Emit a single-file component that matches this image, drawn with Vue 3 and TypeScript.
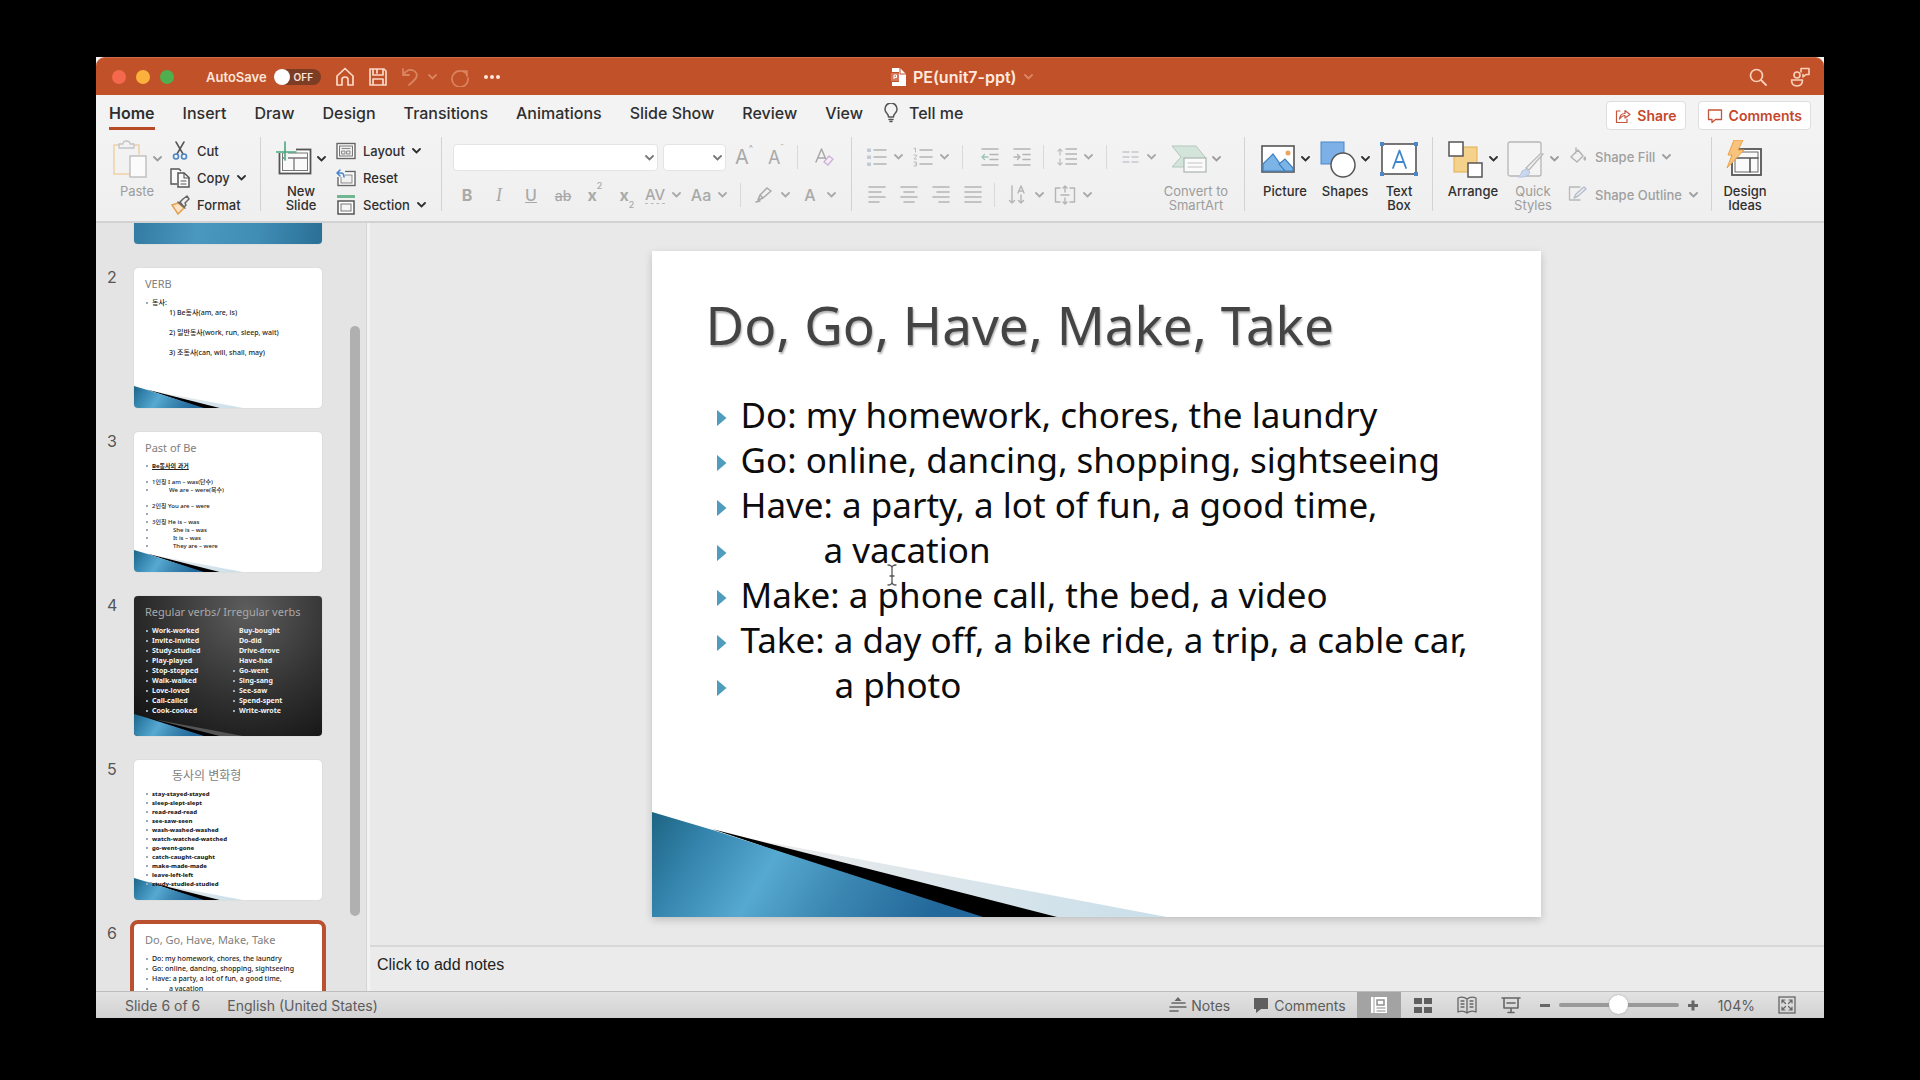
<script setup lang="ts">
import { h, onMounted, ref } from 'vue'

type IconDef = [width: number, height: number, markup: string]

const line = (d: string, c = '#555', w = 1.5) =>
  `<path d="${d}" fill="none" stroke="${c}" stroke-width="${w}" stroke-linejoin="round" stroke-linecap="round"/>`
const G = '#b4b4b4'

const icons: Record<string, IconDef> = {
  chevron: [9, 6, `<path d="M1 1l3.500 3.500L8 1" fill="none" stroke="currentColor" stroke-width="1.800" stroke-linecap="round"/>`],
  home: [20, 20, line('M2 9L10 1.500L18 9V18H13V12.500Q13 10 10 10Q7 10 7 12.500V18H2Z', '#fbd9c6', 1.7)],
  save: [20, 20, line('M2 2H16L18 4V18H2ZM5 2V8H15V2M5 18V12H15V18M9 3V6', '#fbd9c6', 1.7)],
  undo: [18, 20, line('M2 2V8H8M2 8Q6 2 11 3Q17 5 15.500 10Q14 13 8 18', '#d98560', 1.8)],
  redo: [20, 20, line('M17 4V9M17 8A8 8 0 1 0 18 11M12 4H17', '#d98560', 1.7)],
  more: [18, 6, '<g fill="#fde6da"><circle cx="3" cy="3" r="2"/><circle cx="9" cy="3" r="2"/><circle cx="15" cy="3" r="2"/></g>'],
  doc: [15, 18, '<path d="M1 0H9L15 6V18H1V14H8V4H1Z" fill="#fff"/><path d="M9 0V6H15" fill="none" stroke="#c05129"/><rect y="5" width="8" height="8" fill="#d4775a"/><path d="M3 11V7H5.500V9.500H3" fill="none" stroke="#fff"/>'],
  search: [18, 18, '<circle cx="7.500" cy="7.500" r="6" fill="none" stroke="#fbd0bb" stroke-width="1.700"/>' + line('M12 12L17 17', '#fbd0bb', 1.8)],
  person: [20, 20, '<circle cx="7" cy="8" r="3" fill="none" stroke="#fbd0bb" stroke-width="1.600"/>' + line('M1.500 13H12.500Q12.500 19 7 19Q1.500 19 1.500 13ZM11 5V1.500H19V7.500H16L13 10V7.500', '#fbd0bb', 1.6)],
  bulb: [14, 20, line('M4.500 14Q4.500 12 3 10.500A6 6 0 1 1 11 10.500Q9.500 12 9.500 14ZM5 16.500H9M6 18.500H8', '#555', 1.5)],
  share: [16, 16, line('M5 3H1.500V14.500H12V11', '#c4553a', 1.2) + line('M4.500 11Q5 5.500 10 5.500V2.500L15 6.500L10 10V7.500Q7 7.500 4.500 11Z', '#c4553a', 1.2)],
  comment: [16, 16, line('M1.500 2H14.500V11.500H8.500L5 14.500V11.500H1.500Z', '#c4553a', 1.3)],
  paste: [36, 38, line('M7 5H2V34H18M22 5H27V14', '#efd9b8', 2) + line('M7 8V4H11Q11 1 14.500 1Q18 1 18 4H22V8Z', '#c4c4c4', 1.3) + '<rect x="18" y="16" width="16" height="21" fill="#fbfbfb" stroke="#b9b9b9" stroke-width="1.300"/>'],
  cut: [20, 20, line('M6 1L13 13M14 1L7 13', '#555', 1.5) + '<g fill="none" stroke="#4a86c8" stroke-width="1.600"><circle cx="6" cy="15.500" r="2.500"/><circle cx="14" cy="15.500" r="2.500"/></g>'],
  copy: [20, 20, '<g fill="#fafafa">' + '<path d="M7 16H1V1H9L11 3" stroke="#555" stroke-width="1.400"/><path d="M8 5H14L19 9.500V19H8Z" stroke="#555" stroke-width="1.500"/></g>' + line('M14 5V10H19M11 13H16M11 16H16', '#555', 1.1)],
  format: [20, 20, '<path d="M2 10L8 8L14 13L8 19Z" fill="#fbe3c4" stroke="#e2a04f" stroke-width="1.500"/>' + line('M8 7L15 13M10 7L13 4L17 1L19 4L15 8L16 10L14 12Z', '#666', 1.5)],
  newSlide: [36, 36, '<rect x="3.500" y="8.500" width="31" height="24" fill="#fff" stroke="#555" stroke-width="1.800"/><rect x="6.500" y="12" width="25" height="17.500" fill="#fafafa" stroke="#777"/>' + line('M7 17H31M18 17V29', '#777', 1.3) + '<path d="M0 5H20V10H12V20H8V12H0Z" fill="#f3f3f3"/>' + line('M0 11H20M9 1V19', '#45a97c', 1.6)],
  layout: [20, 18, '<rect x="1" y="1.500" width="18" height="15" fill="#fff" stroke="#666" stroke-width="1.400"/><rect x="3.500" y="4" width="13" height="10" fill="#f0f0f0" stroke="#777"/>' + line('M6 6.500H14M6 9H9V12H6ZM11 9H14V12H11Z', '#888', 1)],
  reset: [20, 18, '<rect x="2" y="2.500" width="17" height="14" fill="#fff" stroke="#666" stroke-width="1.400"/><rect x="5" y="6" width="11" height="8" fill="#f0f0f0" stroke="#888"/><path d="M0 0H9V8H0Z" fill="#f3f3f3"/>' + line('M4 1L1 4L4 7M1 4H5Q8 4 8 8', '#4a86c8', 1.6)],
  section: [20, 20, '<rect x="1" y="0" width="18" height="3" fill="#6fb693"/><rect x="2" y="6" width="16" height="13" fill="#fff" stroke="#555" stroke-width="1.500"/><rect x="5" y="9" width="10" height="7" fill="#f5f5f5" stroke="#777"/>'],
  eraser: [20, 20, line('M1 15L6.500 2L12 15M3 11H10', '#a8a8a8', 1.5) + '<path d="M9 15L14 9L18 12L13 18Z" fill="#f5ecf8" stroke="#cdb3d6" stroke-width="1.300"/>'],
  pen: [20, 20, line('M4 15L6 10L13 3L17 6L9 13ZM2 17L6 16M6 10L9 13', '#a8a8a8', 1.5)],
  bullets: [20, 20, line('M7 3H19M7 10H19M7 17H19', G, 1.5) + '<g fill="#c3cbd8"><rect x="0" y="1.500" width="4" height="3.500"/><rect x="0" y="8.500" width="4" height="3.500"/><rect x="0" y="15.500" width="4" height="3.500"/></g>'],
  numbers: [20, 20, line('M7 3H19M7 10H19M7 17H19', G, 1.5) + line('M1 1.500L2.500 1V5M1 8H3.500V9L1 12H3.500M1 15H3.500V19H1M2 17H3.500', '#bdbdbd', 1)],
  outdent: [20, 20, line('M2 2H18M10 7.500H18M10 12.500H18M2 18H18', G, 1.5) + line('M8 10H2M4.500 7.500L2 10L4.500 12.500', '#9fc5b4', 1.4)],
  indent: [20, 20, line('M2 2H18M11 7.500H18M11 12.500H18M2 18H18', G, 1.5) + line('M2 10H8M5.500 7.500L8 10L5.500 12.500', '#b4b4b4', 1.4)],
  spacing: [20, 20, line('M9 2H20M9 7H20M9 12H20M9 17H20', G, 1.5) + line('M3 8V2M1 4L3 2L5 4M3 12V18M1 16L3 18L5 16', '#c0c0c0', 1.3)],
  columns: [20, 20, line('M3 5H9M3 10H9M3 15H9M12 5H18M12 10H18M12 15H18', '#c6c6ce', 1.3)],
  alignLeft: [20, 20, line('M2 2H18M2 7H14M2 12H18M2 17H12', G, 1.6)],
  alignCenter: [20, 20, line('M2 2H18M5 7H15M2 12H18M5 17H15', G, 1.6)],
  alignRight: [20, 20, line('M2 2H18M6 7H18M2 12H18M8 17H18', G, 1.6)],
  justify: [20, 20, line('M2 2H18M2 7H18M2 12H18M2 17H18', G, 1.6)],
  textDir: [20, 20, line('M4 1V18M1.500 15.500L4 18L6.500 15.500M10 8L13 1L16 8M11 6H15M13 10V18M10.500 15.500L13 18L15.500 15.500', G, 1.4)],
  alignText: [22, 20, line('M6 3H1.500V17H6M16 3H20.500V17H16M7 10H15M11 1V7M9 3L11 1L13 3M11 13V19M9 17L11 19L13 17', G, 1.4)],
  smartArt: [36, 36, '<path d="M1 5H25L34 16L25 26H1L10 16Z" fill="#d3e4da" stroke="#b3c8bc"/><rect x="13" y="17" width="22" height="14" fill="#fbfbfb" stroke="#b0b8b3" stroke-width="1.300"/>' + line('M17 22H31M17 26H31', '#c3c3c3', 1.2)],
  picture: [36, 36, '<rect x="2" y="5" width="32" height="26" fill="#fff" stroke="#555" stroke-width="1.600"/><path d="M3 23L13 13L25 30H3Z" fill="#7db4e6" stroke="#3c80c0" stroke-width="1.200"/><path d="M19 23L25 18L33 27V30H25Z" fill="#7db4e6" stroke="#3c80c0" stroke-width="1.200"/><circle cx="28" cy="12" r="2.500" fill="#eba55c"/>'],
  shapes: [36, 38, '<rect x="1" y="2" width="23" height="22" fill="#7db0e6" stroke="#4a86c8"/><circle cx="23" cy="25" r="12" fill="#fff" stroke="#555" stroke-width="1.500"/>'],
  textBox: [38, 36, '<rect x="2" y="3" width="34" height="30" fill="#fff" stroke="#555" stroke-width="1.600"/>' + line('M13 27L19.500 9.500L26 27M15.500 21H23.500', '#3f86cc', 1.8) + '<g fill="#4a86c8"><rect width="4" height="4" y="1"/><rect x="34" y="1" width="4" height="4"/><rect y="31" width="4" height="4"/><rect x="34" y="31" width="4" height="4"/></g>'],
  arrange: [36, 38, '<rect x="6" y="7" width="23" height="25" fill="#f5d28c" stroke="#e0ad50"/><g fill="#fff" stroke="#555" stroke-width="1.500"><rect x="1" y="2" width="14" height="14"/><rect x="20" y="23" width="14" height="14"/></g>'],
  quick: [38, 38, '<rect x="1" y="2" width="33" height="34" rx="2" fill="#f4f4f4" stroke="#b6b6b6" stroke-width="1.300"/><path d="M36 14L22 30L19 28L33 14Z" fill="#f0f0f0" stroke="#b6b6b6" stroke-width="1.200"/><path d="M19 29L23 32Q21 38 11 37Q15 34 15 31Z" fill="#c9d6ee" stroke="#b6c3dc"/>'],
  fill: [20, 20, line('M3 10L10 3L15 9L9 15ZM8 1V6M17 10Q15 12 17 13Q18 12 17 10', '#b2b2b2', 1.4)],
  outline: [20, 20, line('M12 2H1.500V15H12', '#b8b8b8', 1.3) + line('M6 13L8 9L16 2L18 4L10 11Z', '#b5bccb', 1.4)],
  ideas: [38, 38, '<rect x="6" y="9" width="29" height="26" fill="#fff" stroke="#555" stroke-width="1.800"/><rect x="9" y="12" width="23" height="20" fill="#fafafa" stroke="#666"/>' + line('M9 18H32M24 18V32', '#555', 1.6) + '<path d="M8 0H17L12 10H18L1 28L6 15H2Z" fill="#f7c37d" stroke="#ee9f45"/>'],
  notes: [18, 18, '<path d="M9 1L12.500 5H5.500Z" fill="#666"/>' + line('M3 7H16M1 11H17M1 15H9', '#666', 1.6)],
  bubble: [16, 16, '<path d="M1 1H15V12H8L3 16V12H1Z" fill="#5f5f5f"/>'],
  normal: [20, 18, '<rect x="2" y="1" width="16" height="16" fill="#fff"/><path d="M5 1V17" stroke="#a3a3a3"/>' + '<rect x="8" y="4" width="7" height="5" fill="none" stroke="#888" stroke-width="1.400"/>' + line('M8 12H16M8 15H16', '#888', 1.2)],
  sorter: [20, 18, '<g fill="#5f5f5f"><rect x="1" y="2" width="8" height="6"/><rect x="11" y="2" width="8" height="6"/><rect x="1" y="11" width="8" height="6"/><rect x="11" y="11" width="8" height="6"/></g>'],
  book: [20, 18, line('M10 3Q6 0 1 2V16Q6 14 10 17Q14 14 19 16V2Q14 0 10 3V17M4 5H7M4 8H7M4 11H7M13 5H16M13 8H16M13 11H16', '#666', 1.3)],
  show: [20, 18, line('M1 2H19M3 2V12H17V2M6 7H14M10 12V16M7 16.500H13', '#666', 1.6)],
  fit: [18, 18, '<rect x="1" y="1" width="16" height="16" fill="none" stroke="#666" stroke-width="1.300"/>' + line('M4 7V4H7M11 4H14V7M14 11V14H11M7 14H4V11M4 4L7.500 7.500M14 4L10.500 7.500M14 14L10.500 10.500M4 14L7.500 10.500', '#666', 1.2)],
  caret: [10, 22, line('M1 1Q5 1 5 4Q5 1 9 1M5 4V18M1 21Q5 21 5 18Q5 21 9 21M3 12H7', '#555', 1.3)],
}

const Icon = (props: { name: string }) => {
  const [w, hgt, markup] = icons[props.name]
  return h('svg', { width: w, height: hgt, viewBox: `0 0 ${w} ${hgt}`, 'aria-hidden': 'true', innerHTML: markup })
}
Icon.props = ['name']

const wedgeMarkup = (dark: boolean) => `
  <defs>
    <linearGradient id="wedgeBlue" x1="0" y1="0" x2="1" y2="0.200">
      <stop offset="0" stop-color="#1d6483"/><stop offset="0.200" stop-color="#3585ae"/>
      <stop offset="0.440" stop-color="#56a9d1"/><stop offset="0.700" stop-color="#3a86b1"/><stop offset="1" stop-color="#23689a"/>
    </linearGradient>
    <linearGradient id="wedgePale" x1="0" y1="0" x2="1" y2="0">
      <stop offset="0" stop-color="#ececec"/><stop offset="1" stop-color="#c9dfea"/>
    </linearGradient>
  </defs>
  <path d="M100 588L515 666H300Z" fill="${dark ? '#555' : 'url(#wedgePale)'}"/>
  <path d="M60 578L405 666H320Z" fill="#000"/>
  <path d="M0 561L64 580L331 666H0Z" fill="url(#wedgeBlue)"/>`
const Wedge = (props: { dark?: boolean }) =>
  h('svg', { viewBox: '0 0 889 666', preserveAspectRatio: 'none', 'aria-hidden': 'true', innerHTML: wedgeMarkup(!!props.dark) })
Wedge.props = ['dark']

const tabs = ['Home', 'Insert', 'Draw', 'Design', 'Transitions', 'Animations', 'Slide Show', 'Review', 'View']

interface Row { text: string; indent?: number; bare?: boolean; mark?: boolean }
interface Thumb { id: number; title: string; kind: string; rows: Row[]; right?: string[] }

const list = (s: string): Row[] => s.split('|').map(text => ({ text }))

const currentRows: Row[] = [
  { text: 'Do: my homework, chores, the laundry' },
  { text: 'Go: online, dancing, shopping, sightseeing' },
  { text: 'Have: a party, a lot of fun, a good time,' },
  { text: 'a vacation', indent: 1 },
  { text: 'Make: a phone call, the bed, a video' },
  { text: 'Take: a day off, a bike ride, a trip, a cable car,' },
  { text: 'a photo', indent: 2 },
]

const thumbs: Thumb[] = [
  { id: 1, title: '', kind: 'cover', rows: [] },
  {
    id: 2, title: 'VERB', kind: 'verb', rows: [
      { text: '동사:' },
      { text: '1) Be동사(am, are, is)', indent: 1, bare: true },
      { text: '', bare: true },
      { text: '2) 일반동사(work, run, sleep, wait)', indent: 1, bare: true },
      { text: '', bare: true },
      { text: '3) 조동사(can, will, shall, may)', indent: 1, bare: true },
    ],
  },
  {
    id: 3, title: 'Past of Be', kind: 'past', rows: [
      { text: 'Be동사의 과거', mark: true },
      { text: '', bare: true },
      { text: '1인칭 I am – was(단수)' },
      { text: 'We are – were(복수)', indent: 1 },
      { text: '', bare: true },
      { text: '2인칭 You are – were' },
      { text: '' },
      { text: '3인칭 He is – was' },
      { text: 'She is – was', indent: 2 },
      { text: 'It is – was', indent: 2 },
      { text: 'They are – were', indent: 2 },
    ],
  },
  {
    id: 4, title: 'Regular verbs/ Irregular verbs', kind: 'dark',
    rows: list('Work-worked|Invite-invited|Study-studied|Play-played|Stop-stopped|Walk-walked|Love-loved|Call-called|Cook-cooked'),
    right: ['Buy-bought', 'Do-did', 'Drive-drove', 'Have-had', 'Go-went', 'Sing-sang', 'See-saw', 'Spend-spent', 'Write-wrote'],
  },
  {
    id: 5, title: '동사의 변화형', kind: 'forms',
    rows: list('stay-stayed-stayed|sleep-slept-slept|read-read-read|see-saw-seen|wash-washed-washed|watch-watched-watched|go-went-gone|catch-caught-caught|make-made-made|leave-left-left|study-studied-studied'),
  },
  { id: 6, title: 'Do, Go, Have, Make, Take', kind: 'current', rows: currentRows.slice(0, 4) },
]

const selected = ref(6)
const autosave = ref(false)
const zoom = ref(50)
const rail = ref<HTMLElement | null>(null)
onMounted(() => { if (rail.value) rail.value.scrollTop = 143 })
</script>

<template>
  <div class="desktop">
    <div class="window">
      <header class="titlebar">
        <div class="lights"><i class="red"></i><i class="amber"></i><i class="green"></i></div>
        <label class="autosave">AutoSave
          <span class="switch"><input v-model="autosave" type="checkbox"><b></b><em>{{ autosave ? 'ON' : 'OFF' }}</em></span>
        </label>
        <div class="quick-access">
          <button aria-label="Home"><Icon name="home" /></button>
          <button aria-label="Save"><Icon name="save" /></button>
          <button class="undo" aria-label="Undo"><Icon name="undo" /><Icon name="chevron" /></button>
          <button aria-label="Redo"><Icon name="redo" /></button>
          <button aria-label="More"><Icon name="more" /></button>
        </div>
        <button class="doc-title"><Icon name="doc" /><span>PE(unit7-ppt)</span><Icon name="chevron" /></button>
        <div class="title-right">
          <button aria-label="Search"><Icon name="search" /></button>
          <button aria-label="Account"><Icon name="person" /></button>
        </div>
      </header>

      <nav class="tabs">
        <button v-for="tab in tabs" :key="tab" :class="{ active: tab === 'Home' }">{{ tab }}</button>
        <button class="tell"><Icon name="bulb" />Tell me</button>
        <div class="tab-actions">
          <button class="action"><Icon name="share" />Share</button>
          <button class="action"><Icon name="comment" />Comments</button>
        </div>
      </nav>

      <section class="ribbon">
        <div class="group clipboard">
          <button class="big off"><span class="glyph"><Icon name="paste" /><Icon name="chevron" /></span><span>Paste</span></button>
          <div class="stack">
            <button><Icon name="cut" />Cut</button>
            <button><Icon name="copy" />Copy<Icon name="chevron" /></button>
            <button><Icon name="format" />Format</button>
          </div>
        </div>
        <div class="group slides">
          <button class="big"><span class="glyph"><Icon name="newSlide" /><Icon name="chevron" /></span><span>New<br>Slide</span></button>
          <div class="stack">
            <button><Icon name="layout" />Layout<Icon name="chevron" /></button>
            <button><Icon name="reset" />Reset</button>
            <button><Icon name="section" />Section<Icon name="chevron" /></button>
          </div>
        </div>
        <div class="group font">
          <div class="row">
            <span class="combo wide"><select aria-label="Font"><option></option></select><Icon name="chevron" /></span>
            <span class="combo"><select aria-label="Font size"><option></option></select><Icon name="chevron" /></span>
            <button class="tool big-a">A<sup>^</sup></button>
            <button class="tool mid-a">A<sup>ˇ</sup></button>
            <i class="sep"></i>
            <button class="tool" aria-label="Clear formatting"><Icon name="eraser" /></button>
          </div>
          <div class="row">
            <button class="tool"><b>B</b></button>
            <button class="tool serif"><i>I</i></button>
            <button class="tool"><u>U</u></button>
            <button class="tool strike"><s>ab</s></button>
            <button class="tool"><b>x</b><sup>2</sup></button>
            <button class="tool"><b>x</b><sub>2</sub></button>
            <button class="split"><span class="kern">AV</span><Icon name="chevron" /></button>
            <button class="split"><span>Aa</span><Icon name="chevron" /></button>
            <i class="sep"></i>
            <button class="split" aria-label="Highlight"><Icon name="pen" /><Icon name="chevron" /></button>
            <button class="split"><span>A</span><Icon name="chevron" /></button>
          </div>
        </div>
        <div class="group para">
          <div>
            <div class="row first">
              <button class="split" aria-label="Bullets"><Icon name="bullets" /><Icon name="chevron" /></button>
              <button class="split" aria-label="Numbering"><Icon name="numbers" /><Icon name="chevron" /></button>
              <i class="sep"></i>
              <button class="tool" aria-label="Decrease indent"><Icon name="outdent" /></button>
              <button class="tool" aria-label="Increase indent"><Icon name="indent" /></button>
              <i class="sep"></i>
              <button class="split" aria-label="Line spacing"><Icon name="spacing" /><Icon name="chevron" /></button>
              <i class="sep"></i>
              <button class="split" aria-label="Columns"><Icon name="columns" /><Icon name="chevron" /></button>
            </div>
            <div class="row">
              <button v-for="a in ['alignLeft', 'alignCenter', 'alignRight', 'justify']" :key="a" class="tool" :aria-label="a"><Icon :name="a" /></button>
              <i class="sep"></i>
              <button class="split" aria-label="Text direction"><Icon name="textDir" /><Icon name="chevron" /></button>
              <button class="split" aria-label="Align text"><Icon name="alignText" /><Icon name="chevron" /></button>
            </div>
          </div>
          <button class="big off smart"><span class="glyph"><Icon name="smartArt" /><Icon name="chevron" /></span><span>Convert to<br>SmartArt</span></button>
        </div>
        <div class="group insert">
          <button class="big"><span class="glyph"><Icon name="picture" /><Icon name="chevron" /></span><span>Picture</span></button>
          <button class="big"><span class="glyph"><Icon name="shapes" /><Icon name="chevron" /></span><span>Shapes</span></button>
          <button class="big slim"><span class="glyph"><Icon name="textBox" /></span><span>Text<br>Box</span></button>
        </div>
        <div class="group arrange">
          <button class="big"><span class="glyph"><Icon name="arrange" /><Icon name="chevron" /></span><span>Arrange</span></button>
          <button class="big off"><span class="glyph"><Icon name="quick" /><Icon name="chevron" /></span><span>Quick<br>Styles</span></button>
          <div class="stack tall">
            <button><Icon name="fill" />Shape Fill<Icon name="chevron" /></button>
            <button><Icon name="outline" />Shape Outline<Icon name="chevron" /></button>
          </div>
        </div>
        <div class="group ideas">
          <button class="big"><span class="glyph"><Icon name="ideas" /></span><span>Design<br>Ideas</span></button>
        </div>
      </section>

      <main class="work">
        <aside class="panel">
          <ol ref="rail" class="rail">
            <li v-for="t in thumbs" :key="t.id">
              <span class="num">{{ t.kind === 'cover' ? '' : t.id }}</span>
              <button class="thumb" :class="[t.kind, { selected: selected === t.id }]" :aria-label="'Slide ' + t.id" @click="selected = t.id">
                <Wedge v-if="t.kind !== 'cover'" class="wedge" :dark="t.kind === 'dark'" />
                <span class="thumb-title">{{ t.title }}</span>
                <span class="cols">
                  <span class="col">
                    <span v-for="(r, i) in t.rows" :key="i" :class="['line', 'in' + (r.indent ?? 0), { bare: r.bare, mark: r.mark }]">{{ r.text }}</span>
                  </span>
                  <span v-if="t.right" class="col">
                    <span v-for="(r, i) in t.right" :key="r" class="line" :class="{ bare: i < 4 }">{{ r }}</span>
                  </span>
                </span>
              </button>
            </li>
          </ol>
          <i class="scroll-thumb"></i>
        </aside>

        <section class="stage">
          <div class="canvas">
            <article class="slide">
              <Wedge class="wedge" />
              <h1>Do, Go, Have, Make, Take</h1>
              <ul>
                <li v-for="r in currentRows" :key="r.text" :class="'in' + (r.indent ?? 0)">{{ r.text }}</li>
              </ul>
              <Icon name="caret" class="pointer" />
            </article>
          </div>
          <textarea class="notes" aria-label="Notes" placeholder="Click to add notes"></textarea>
        </section>
      </main>

      <footer class="status">
        <span class="count">Slide 6 of 6</span>
        <span>English (United States)</span>
        <div class="status-right">
          <button class="lab"><Icon name="notes" />Notes</button>
          <button class="lab comments"><Icon name="bubble" />Comments</button>
          <button class="view on" aria-label="Normal view"><Icon name="normal" /></button>
          <button class="view" aria-label="Slide sorter"><Icon name="sorter" /></button>
          <button class="view" aria-label="Reading view"><Icon name="book" /></button>
          <button class="view" aria-label="Slide show"><Icon name="show" /></button>
          <button class="step" aria-label="Zoom out"><i class="minus"></i></button>
          <input v-model="zoom" type="range" min="0" max="100" aria-label="Zoom">
          <button class="step" aria-label="Zoom in"><i class="minus"></i><i class="minus up"></i></button>
          <span class="percent">104%</span>
          <button class="fit" aria-label="Fit slide"><Icon name="fit" /></button>
        </div>
      </footer>
    </div>
  </div>
</template>

<style>
body { background: #000; }
</style>

<style scoped>
* { box-sizing: border-box; }
button { border: 0; padding: 0; margin: 0; background: none; font: inherit; color: inherit; display: flex; align-items: center; white-space: nowrap; }
svg { flex: none; display: block; }
.desktop { height: 100vh; min-height: 700px; padding: 57px 5% 62px; background: #000; font-family: Inter, "Noto Sans CJK KR", sans-serif; color: #2f2f2f; }
.window { height: 100%; display: flex; flex-direction: column; background: #f3f3f3; overflow: hidden; }

.titlebar { height: 38px; flex: none; display: grid; grid-template-columns: auto auto auto 1fr auto; align-items: center; position: relative; background: #c05129; border-top: 1px solid #cf6d47; border-radius: 9px 9px 0 0; color: #fde4d8; }
.lights { display: flex; gap: 10px; padding-left: 16px; }
.lights i { width: 14px; height: 14px; border-radius: 50%; }
.red { background: #f4694d; }
.amber { background: #fcb13c; }
.green { background: #4fae4e; }
.autosave { display: flex; align-items: center; gap: 7px; margin-left: 32px; font-size: 13px; font-weight: 600; }
.switch { position: relative; width: 47px; height: 16px; border-radius: 8px; background: #7d3d25; display: flex; align-items: center; }
.switch input { position: absolute; inset: 0; width: 100%; height: 100%; margin: 0; opacity: 0; }
.switch b { width: 16px; height: 16px; border-radius: 50%; background: #fff; }
.switch em { font-style: normal; font-size: 10px; margin-left: 4px; }
.quick-access { display: flex; align-items: center; gap: 13px; margin-left: 14px; }
.undo { gap: 9px; color: #d98560; }
.doc-title { position: absolute; left: 46%; gap: 7px; font-size: 16px; font-weight: 600; color: #ffe9df; }
.doc-title svg:last-child { color: #dc8664; }
.title-right { grid-column: 5; display: flex; gap: 23px; padding-right: 14px; }

.tabs { height: 40px; flex: none; display: flex; align-items: flex-start; padding-left: 13px; gap: 28px; font-size: 16px; font-weight: 500; }
.tabs > button { height: 35px; border-bottom: 3px solid transparent; border-top: 3px solid transparent; }
.tabs > .active { font-weight: 600; border-bottom-color: #b94a26; }
.tell { gap: 11px; margin-left: -7px; }
.tab-actions { margin: 6px 13px 0 auto; display: flex; gap: 12px; }
.action { height: 29px; padding: 0 8px; gap: 6px; background: #fff; border: 1px solid #dedede; border-radius: 4px; color: #c4482c; font-size: 14px; font-weight: 600; }

.ribbon { height: 88px; flex: none; display: flex; padding-top: 2px; font-size: 13px; font-weight: 500; border-bottom: 2px solid #d2d2d2; background: linear-gradient(#f3f3f3, #efefef); }
.group { height: 74px; display: flex; flex: none; border-right: 1px solid #d3d3d3; }
.clipboard { width: 165px; padding-left: 16px; gap: 8px; }
.slides { width: 181px; padding-left: 15px; gap: 10px; }
.font { width: 410px; padding: 1px 0 0 9px; flex-direction: column; color: #a9a9a9; }
.para { width: 393px; padding: 1px 16px 0 9px; justify-content: space-between; color: #a9a9a9; }
.insert { width: 188px; padding-left: 15px; gap: 10px; }
.arrange { width: 279px; padding-left: 15px; gap: 10px; }
.ideas { padding-left: 8px; border: 0; }
.big { width: 50px; height: 78px; flex-direction: column; line-height: 14px; text-align: center; padding-top: 2px; }
.slim { width: 38px; }
.smart { width: 64px; }
.para .smart { margin-top: -1px; }
.glyph { height: 40px; display: flex; align-items: center; gap: 5px; margin-bottom: 5px; flex: none; }
.off { color: #9c9c9c; font-weight: 400; }
.stack { display: flex; flex-direction: column; }
.stack button { height: 27px; gap: 7px; flex: none; }
.stack.tall { color: #9f9f9f; padding-top: 1px; }
.stack.tall button { height: 38px; }
.row { height: 38px; display: flex; align-items: center; flex: none; }
.row.first { padding-left: 4px; }
.combo { position: relative; width: 63px; height: 27px; margin-right: 2px; }
.combo.wide { width: 205px; margin: 0 5px 0 2px; }
.combo select { width: 100%; height: 100%; appearance: none; background: #fff; border: 1px solid #e4e4e4; border-radius: 4px; }
.combo svg { position: absolute; right: 4px; top: 11px; color: #777; pointer-events: none; }
.tool { width: 32px; height: 30px; justify-content: center; font-size: 16px; }
.tool sup { font-size: 9px; align-self: flex-start; }
.tool sub { font-size: 9px; align-self: flex-end; }
.big-a { font-size: 20px; font-weight: 400; }
.mid-a { font-size: 18px; font-weight: 400; }
.serif { font-family: "Liberation Serif", serif; font-size: 18px; }
.strike { font-size: 14px; }
.split { width: 46px; height: 30px; padding-left: 2px; gap: 7px; font-size: 16px; }
.split span { width: 20px; text-align: center; display: flex; justify-content: center; }
.kern { border-bottom: 1px dashed #b9b9b9; font-size: 15px; line-height: 16px; }
.sep { width: 1px; height: 24px; margin: 0 11px 0 5px; background: #d9d9d9; }

.work { flex: 1; min-height: 0; display: flex; }
.panel { width: 271px; flex: none; position: relative; background: #e4e4e5; border-right: 1px solid #d4d4d4; }
.rail { height: 100%; overflow-y: auto; scrollbar-width: none; list-style: none; margin: 0; padding: 24px 0; display: flex; flex-direction: column; gap: 24px; }
.rail li { display: flex; padding-left: 11px; flex: none; }
.num { width: 27px; font-size: 16px; line-height: 18px; color: #555; }
.thumb { position: relative; width: 188px; height: 140px; display: block; text-align: left; background: #fff; border-radius: 4px; overflow: hidden; font-family: "Noto Sans", "Noto Sans CJK KR", sans-serif; color: #222; font-size: 7px; font-weight: 500; box-shadow: 0 0 1px #aaa; }
.selected { overflow: visible; outline: 4px solid #b9502f; }
.wedge { position: absolute; inset: 0; width: 100%; height: 100%; }
.thumb-title { position: absolute; top: 7px; left: 11px; font-size: 11px; line-height: 18px; font-weight: 400; color: #808080; }
.cols { position: absolute; inset: 30px 0 0 12px; display: flex; }
.col { display: block; width: 87px; }
.line { display: block; height: 10px; line-height: 10px; white-space: nowrap; }
.line::before { content: ""; display: inline-block; width: 2px; height: 2px; background: #9ab; margin-right: 4px; vertical-align: middle; }
.line.bare::before { background: none; }
.line.in1::before { margin-right: 21px; }
.line.in2::before { margin-right: 25px; }
.mark { text-decoration: underline; font-weight: 700; }
.cover { background: linear-gradient(100deg, #2a7299, #4a97bf 40%, #3f8cb5 70%, #2a6f95); }
.past .line { height: 8px; line-height: 8px; }
.past { font-size: 6px; }
.dark { background: radial-gradient(circle at 60% 10%, #5d5d5d, #333 50%, #111 95%); color: #f2f2f2; font-weight: 700; }
.dark .thumb-title { color: #a9a9a9; }
.forms { font-size: 6px; font-weight: 800; }
.forms .line { height: 9px; line-height: 9px; }
.forms .thumb-title { left: 38px; font-size: 12px; }
.scroll-thumb { position: absolute; top: 103px; right: 6px; width: 10px; height: 590px; border-radius: 5px; background: #b0b0b0; }

.stage { flex: 1; min-width: 0; display: flex; flex-direction: column; background: #e9e9e9; border-left: 3px solid #f3f3f3; }
.canvas { flex: 1; min-height: 0; display: flex; justify-content: center; padding: 28px 2px 0 0; overflow: hidden; }
.slide { position: relative; width: 889px; max-width: 92%; height: 666px; background: #fff; box-shadow: 0 3px 8px rgba(0, 0, 0, .18); padding: 36px 50px 0 54px; font-family: "Noto Sans", sans-serif; }
.slide h1 { margin: 0; font-size: 53px; line-height: 76px; font-weight: 400; color: #444; text-shadow: 1px 2px 2px rgba(0, 0, 0, .3); position: relative; white-space: nowrap; }
.slide ul { list-style: none; margin: 29px 0 0; padding: 0 0 0 11px; position: relative; }
.slide li { height: 45px; display: flex; align-items: center; font-size: 35px; line-height: 45px; color: #0c0c0c; white-space: nowrap; }
.slide li::before { content: ""; flex: none; width: 10px; height: 17px; margin: 7px 14px 0 0; background: #4f9cbc; clip-path: polygon(0 0, 100% 50%, 0 100%); }
.slide li.in1::before { margin-right: 97px; }
.slide li.in2::before { margin-right: 108px; }
.pointer { position: absolute; left: 235px; top: 313px; }
.notes { height: 46px; flex: none; resize: none; border: 0; border-top: 2px solid #d8d8d8; background: #ebebeb; padding: 8px 7px; font: 16px/20px "Liberation Sans", sans-serif; display: block; }
.notes::placeholder { color: #222; opacity: 1; }

.status { height: 27px; flex: none; display: flex; align-items: center; padding-left: 29px; background: linear-gradient(#e2e2e2, #d2d2d2); border-top: 1px solid #bdbdbd; font-size: 14px; color: #5c5c5c; white-space: nowrap; }
.count { margin-right: 27px; }
.status-right { height: 100%; margin-left: auto; display: flex; align-items: center; padding-right: 28px; }
.lab { gap: 4px; margin-right: 23px; }
.lab.comments { gap: 5px; margin-right: 11px; }
.view { width: 44px; height: 100%; justify-content: center; }
.view.on { background: #a3a3a3; }
.step { position: relative; width: 12px; height: 12px; justify-content: center; margin-left: 6px; }
.minus { width: 10px; height: 3px; background: #666; }
.minus.up { position: absolute; transform: rotate(90deg); }
input[type="range"] { appearance: none; width: 120px; height: 20px; margin: 0 2px 0 8px; background: none; }
input[type="range"]::-webkit-slider-runnable-track { height: 4px; border-radius: 2px; background: #999; }
input[type="range"]::-webkit-slider-thumb { appearance: none; width: 19px; height: 19px; margin-top: -8px; border-radius: 50%; background: #fff; box-shadow: 0 0 2px #999; }
.percent { margin: 0 23px 0 19px; }
</style>
